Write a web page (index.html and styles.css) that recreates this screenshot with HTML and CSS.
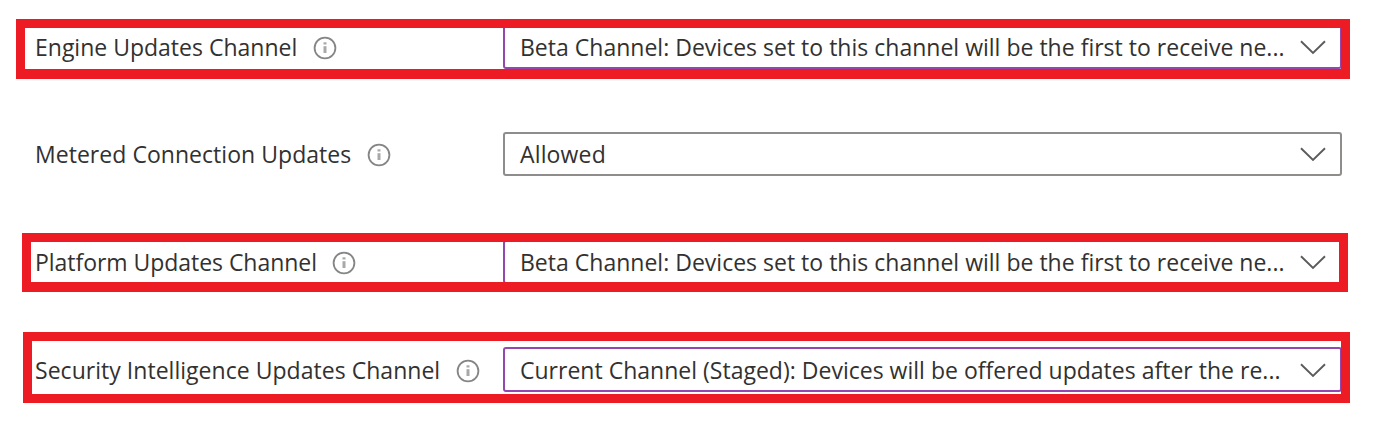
FILE: index.html
```html
<!DOCTYPE html>
<html lang="en">
<head>
<meta charset="utf-8">
<title>Update channels</title>
<link rel="stylesheet" href="styles.css">
</head>
<body>
<svg class="defs" aria-hidden="true">
  <symbol id="info" viewBox="0 0 24 24"><circle cx="12" cy="12" r="10.4" fill="none" stroke="#858585" stroke-width="1.8"/><path d="M12 10.2V17" stroke="#a8a8a8" stroke-width="3"/><path d="M12 6.3V8.5" stroke="#a8a8a8" stroke-width="3"/></symbol>
  <symbol id="chevron" viewBox="0 0 26 15"><path d="M1 1.3L13 13L25 1.3" fill="none" stroke="#5c5b5a" stroke-width="1.9"/></symbol>
</svg>
<main class="form">
  <div class="row">
    <div class="label"><span class="t1">Engine Updates Channel</span><svg class="info"><use href="#info"/></svg></div>
    <div class="select changed"><span class="v1">Beta Channel: Devices set to this channel will be the first to receive ne...</span><svg class="chevron"><use href="#chevron"/></svg></div>
  </div>
  <div class="row">
    <div class="label"><span class="t2">Metered Connection Updates</span><svg class="info"><use href="#info"/></svg></div>
    <div class="select"><span class="v2">Allowed</span><svg class="chevron"><use href="#chevron"/></svg></div>
  </div>
  <div class="row">
    <div class="label"><span class="t3">Platform Updates Channel</span><svg class="info"><use href="#info"/></svg></div>
    <div class="select changed"><span class="v1">Beta Channel: Devices set to this channel will be the first to receive ne...</span><svg class="chevron"><use href="#chevron"/></svg></div>
  </div>
  <div class="row last">
    <div class="label"><span class="t4">Security Intelligence Updates Channel</span><svg class="info"><use href="#info"/></svg></div>
    <div class="select changed"><span class="v4">Current Channel (Staged): Devices will be offered updates after the re...</span><svg class="chevron"><use href="#chevron"/></svg></div>
  </div>
</main>
<div class="mark mark-engine"></div>
<div class="mark mark-platform"></div>
<div class="mark mark-security"></div>
</body>
</html>
```
FILE: styles.css
```css
* { box-sizing: border-box; }
body {
  margin: 0;
  width: 1375px;
  height: 436px;
  overflow: hidden;
  position: relative;
  background: #fff;
  color: #323130;
  font: 23px/44px "Open Sans", "Noto Sans", sans-serif;
}
.defs { position: absolute; width: 0; height: 0; }
.form {
  padding: 25px 33px 0 35px;
  display: grid;
  row-gap: 63.4px;
}
.row { display: grid; grid-template-columns: 468px 839px; height: 44px; }
.last { height: 45px; }
.label { display: flex; align-items: center; white-space: nowrap; }
.label span { flex: none; }
.info { flex: none; width: 24px; height: 24px; margin: 2px 0 0 16px; }
.select {
  display: flex;
  align-items: center;
  justify-content: space-between;
  padding: 0 14px 0 15px;
  border: 2px solid #8f8d8b;
  border-radius: 3px;
  white-space: nowrap;
  line-height: 40px;
}
.changed { border-color: #9448ae; }
.chevron { flex: none; width: 26px; height: 15px; margin-top: 1px; }
.t1 { width: 262px; }
.t2 { width: 316px; letter-spacing: .04px; }
.t3 { width: 281px; letter-spacing: -.04px; }
.t4 { width: 405px; letter-spacing: .03px; }
.v1 { letter-spacing: .01px; }
.v2 { letter-spacing: .15px; }
.v4 { letter-spacing: .01px; }
.mark { position: absolute; border: 9px solid #ed1c24; }
.mark-engine { left: 16px; top: 19px; width: 1334px; height: 60px; border-bottom-width: 10px; }
.mark-platform { left: 22px; top: 233px; width: 1326px; height: 59px; border-bottom-width: 10px; }
.mark-security { left: 23px; top: 332px; width: 1327px; height: 71px; }
```
